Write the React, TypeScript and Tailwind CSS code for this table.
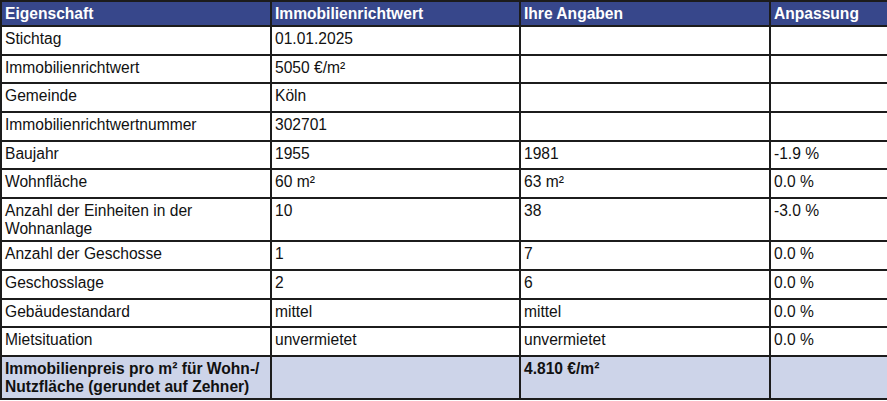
import React from 'react'

type Row = {
  label: string
  richtwert: string
  angaben: string
  anpassung: string
  tall?: boolean
}

const rows: Row[] = [
  { label: 'Stichtag', richtwert: '01.01.2025', angaben: '', anpassung: '' },
  { label: 'Immobilienrichtwert', richtwert: '5050 €/m²', angaben: '', anpassung: '' },
  { label: 'Gemeinde', richtwert: 'Köln', angaben: '', anpassung: '' },
  { label: 'Immobilienrichtwertnummer', richtwert: '302701', angaben: '', anpassung: '' },
  { label: 'Baujahr', richtwert: '1955', angaben: '1981', anpassung: '-1.9 %' },
  { label: 'Wohnfläche', richtwert: '60 m²', angaben: '63 m²', anpassung: '0.0 %' },
  { label: 'Anzahl der Einheiten in der Wohnanlage', richtwert: '10', angaben: '38', anpassung: '-3.0 %', tall: true },
  { label: 'Anzahl der Geschosse', richtwert: '1', angaben: '7', anpassung: '0.0 %' },
  { label: 'Geschosslage', richtwert: '2', angaben: '6', anpassung: '0.0 %' },
  { label: 'Gebäudestandard', richtwert: 'mittel', angaben: 'mittel', anpassung: '0.0 %' },
  { label: 'Mietsituation', richtwert: 'unvermietet', angaben: 'unvermietet', anpassung: '0.0 %' },
]

const cell = 'border-2 border-[#1c1c1c] pl-[3px] pr-1 pt-[3px] align-top'

export default function App() {
  return (
    <div className="w-[887px] h-[401px] bg-white font-['Liberation_Sans',Arial,sans-serif] text-[15.6px] leading-[18px] text-[#111]">
      <table className="w-[887px] table-fixed border-collapse">
        <colgroup>
          <col className="w-[270px]" />
          <col className="w-[249px]" />
          <col className="w-[250px]" />
          <col className="w-[118px]" />
        </colgroup>
        <thead>
          <tr className="h-[25px] bg-[#37478b] text-white font-bold text-left">
            <th className={cell}>Eigenschaft</th>
            <th className={cell}>Immobilienrichtwert</th>
            <th className={cell}>Ihre Angaben</th>
            <th className={cell}>Anpassung</th>
          </tr>
        </thead>
        <tbody>
          {rows.map((row) => (
            <tr key={row.label} className={row.tall ? 'h-[43px]' : 'h-[28.7px]'}>
              <td className={cell}>{row.label}</td>
              <td className={cell}>{row.richtwert}</td>
              <td className={cell}>{row.angaben}</td>
              <td className={cell}>{row.anpassung}</td>
            </tr>
          ))}
          <tr className="h-[43px] bg-[#cdd4e9] font-bold">
            <td className={cell}>
              Immobilienpreis pro m² für Wohn-/
              <br />
              Nutzfläche (gerundet auf Zehner)
            </td>
            <td className={cell}></td>
            <td className={cell}>4.810 €/m²</td>
            <td className={cell}></td>
          </tr>
        </tbody>
      </table>
    </div>
  )
}
